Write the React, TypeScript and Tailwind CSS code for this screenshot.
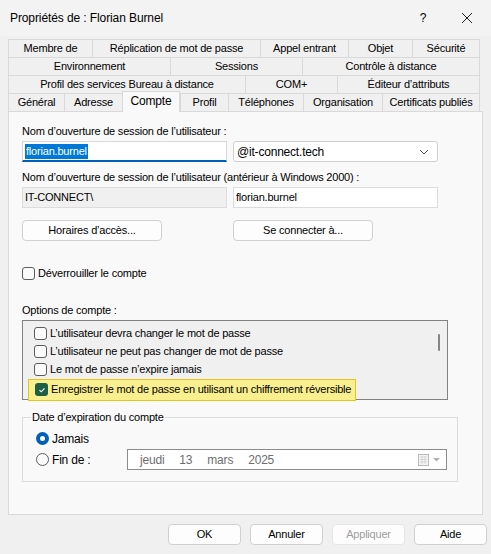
import React from "react";

const rows: { label: string; w: number; sel?: boolean }[][] = [
  [
    { label: "Membre de", w: 84 },
    { label: "Réplication de mot de passe", w: 168 },
    { label: "Appel entrant", w: 88 },
    { label: "Objet", w: 64 },
    { label: "Sécurité", w: 68 },
  ],
  [
    { label: "Environnement", w: 162 },
    { label: "Sessions", w: 132 },
    { label: "Contrôle à distance", w: 178 },
  ],
  [
    { label: "Profil des services Bureau à distance", w: 237 },
    { label: "COM+", w: 92 },
    { label: "Éditeur d’attributs", w: 143 },
  ],
  [
    { label: "Général", w: 56 },
    { label: "Adresse", w: 58 },
    { label: "Compte", w: 58, sel: true },
    { label: "Profil", w: 48 },
    { label: "Téléphones", w: 75 },
    { label: "Organisation", w: 79 },
    { label: "Certificats publiés", w: 98 },
  ],
];

function Check({ checked }: { checked?: boolean }) {
  return checked ? (
    <span className="w-[13px] h-[13px] rounded-[3px] bg-[#1d5f45] flex items-center justify-center shrink-0">
      <svg width="8" height="8" viewBox="0 0 8 8">
        <path d="M1.5 4.2 3.2 5.8 6.5 2.3" fill="none" stroke="#fff" strokeWidth="1.1" />
      </svg>
    </span>
  ) : (
    <span className="w-[13px] h-[13px] rounded-[3px] border border-[#5c5c5c] bg-[#fbfbfb] shrink-0" />
  );
}

function Button({ children, className = "" }: { children: React.ReactNode; className?: string }) {
  return (
    <div
      className={
        "h-[21px] flex items-center justify-center rounded-[4px] border border-[#d0d0d0] bg-[#fdfdfd] " +
        className
      }
    >
      {children}
    </div>
  );
}

export default function App() {
  return (
    <div className="w-[491px] h-[554px] bg-[#f0f0f0] text-[11px] tracking-[-0.2px] text-black font-['Liberation_Sans',Arial,sans-serif] overflow-hidden whitespace-nowrap">
      {/* title bar */}
      <div className="h-[36px] bg-[#f3f3f3] flex items-center pl-[10px] text-[12px] tracking-[-0.1px]">
        <span className="flex-1">Propriétés de : Florian Burnel</span>
        <span className="w-[14px] text-center mr-[31px]">?</span>
        <svg width="12" height="12" viewBox="0 0 12 12" className="mr-[18px]">
          <path d="M1 1 11 11M11 1 1 11" stroke="#222" strokeWidth="1" />
        </svg>
      </div>

      {/* tabs */}
      <div className="px-[8px] pt-[3px] relative z-10">
        {rows.map((row, i) => (
          <div key={i} className="flex h-[18px]">
            {row.map((t) => (
              <div
                key={t.label}
                style={{ width: t.w }}
                className={
                  t.sel
                    ? "h-[21px] -mt-[2px] bg-[#f9f9f9] border-x border-t border-[#d9d9d9] flex items-center justify-center text-[12px] pb-[2px]"
                    : "h-[18px] border-t border-l border-[#d9d9d9] last:border-r bg-[#f0f0f0] flex items-center justify-center"
                }
              >
                {t.label}
              </div>
            ))}
          </div>
        ))}
      </div>

      {/* panel */}
      <div className="mx-[8px] w-[475px] h-[404px] border border-[#d9d9d9] bg-[#f9f9f9] px-[13px] pt-[12px]">
        <div className="leading-[14px]">Nom d’ouverture de session de l’utilisateur :</div>
        <div className="flex gap-[6px] mt-[3px]">
          <div className="w-[205px] h-[21px] bg-white border border-[#d8d8d8] border-b-2 border-b-[#005fb8] flex items-center pl-[2px]">
            <span className="bg-[#0078d7] text-white px-[1px] leading-[15px]">florian.burnel</span>
          </div>
          <div className="w-[205px] h-[21px] bg-white border border-[#cfcfcf] rounded-[3px] flex items-center pl-[3px] text-[12px]">
            <span className="flex-1">@it-connect.tech</span>
            <svg width="10" height="6" viewBox="0 0 10 6" className="mr-[8px]">
              <path d="M1 1 5 5 9 1" fill="none" stroke="#555" strokeWidth="1" />
            </svg>
          </div>
        </div>

        <div className="leading-[14px] mt-[8px]">Nom d’ouverture de session de l’utilisateur (antérieur à Windows 2000) :</div>
        <div className="flex gap-[6px] mt-[3px]">
          <div className="w-[205px] h-[21px] bg-[#f0f0f0] border border-[#dcdcdc] flex items-center pl-[2px]">IT-CONNECT\</div>
          <div className="w-[205px] h-[21px] bg-white border border-[#dcdcdc] flex items-center pl-[2px]">florian.burnel</div>
        </div>

        <div className="flex gap-[71px] mt-[12px]">
          <Button className="w-[140px]">Horaires d’accès...</Button>
          <Button className="w-[140px]">Se connecter à...</Button>
        </div>

        <div className="flex items-center gap-[3px] mt-[24px]">
          <Check />
          <span>Déverrouiller le compte</span>
        </div>

        <div className="mt-[21px] leading-[14px]">Options de compte :</div>
        <div className="mt-[3px] w-[426px] h-[80px] bg-[#f0f0f0] border border-[#828282] flex">
          <div className="flex-1 pl-[11px] pt-[4px] flex flex-col">
            {[
              "L’utilisateur devra changer le mot de passe",
              "L’utilisateur ne peut pas changer de mot de passe",
              "Le mot de passe n’expire jamais",
            ].map((l) => (
              <div key={l} className="h-[18px] shrink-0 flex items-center gap-[3px]">
                <Check />
                <span>{l}</span>
              </div>
            ))}
            <div className="h-[22px] -ml-[6px] w-[328px] shrink-0 bg-[#f9ef8f] border border-[#e3c51c] flex items-center gap-[3px] pl-[6px] relative z-10">
              <Check checked />
              <span>Enregistrer le mot de passe en utilisant un chiffrement réversible</span>
            </div>
          </div>
          <div className="w-[16px] pt-[13px] flex justify-center">
            <div className="w-[2px] h-[17px] bg-[#858585] rounded" />
          </div>
        </div>

        <div className="mt-[17px] w-[436px] h-[65px] border border-[#dcdcdc] relative pl-[13px] pt-[13px]">
          <span className="absolute -top-[8px] left-[8px] bg-[#f9f9f9] px-[1px] leading-[14px]">Date d’expiration du compte</span>
          <div className="flex items-center gap-[3px] h-[16px]">
            <span className="w-[13px] h-[13px] rounded-full bg-[#005fb8] flex items-center justify-center">
              <span className="w-[5px] h-[5px] rounded-full bg-white" />
            </span>
            <span className="text-[12px]">Jamais</span>
          </div>
          <div className="flex items-center h-[20px] mt-[3px]">
            <span className="w-[13px] h-[13px] rounded-full border border-[#5c5c5c] bg-[#fbfbfb]" />
            <span className="text-[12px] ml-[3px] w-[75px]">Fin de :</span>
            <div className="w-[320px] h-[21px] bg-white border border-[#8c8c8c] flex items-center text-[12px] text-[#6d6d6d]">
              <span className="ml-[12px]">jeudi</span>
              <span className="ml-[15px]">13</span>
              <span className="ml-[15px]">mars</span>
              <span className="ml-[15px]">2025</span>
              <span className="flex-1" />
              <svg width="26" height="12" viewBox="0 0 26 12" className="mr-[3px]">
                <rect x="1.5" y="0.5" width="10" height="11" fill="#f5f5f5" stroke="#b8b8b8" />
                <path d="M3 3h7M3 5.5h7M3 8h7M5 2v8M8 2v8" stroke="#cfcfcf" strokeWidth="0.8" />
                <path d="M16 4h7l-3.5 3.5z" fill="#b0b0b0" />
              </svg>
            </div>
          </div>
        </div>
      </div>

      {/* footer buttons */}
      <div className="flex gap-[9px] pl-[168px] mt-[9px]">
        <Button className="w-[73px] border-[#005fb8]">OK</Button>
        <Button className="w-[73px]">Annuler</Button>
        <Button className="w-[73px] bg-[#f5f5f5] border-[#e5e5e5] text-[#9d9d9d]">Appliquer</Button>
        <Button className="w-[73px]">Aide</Button>
      </div>
    </div>
  );
}
